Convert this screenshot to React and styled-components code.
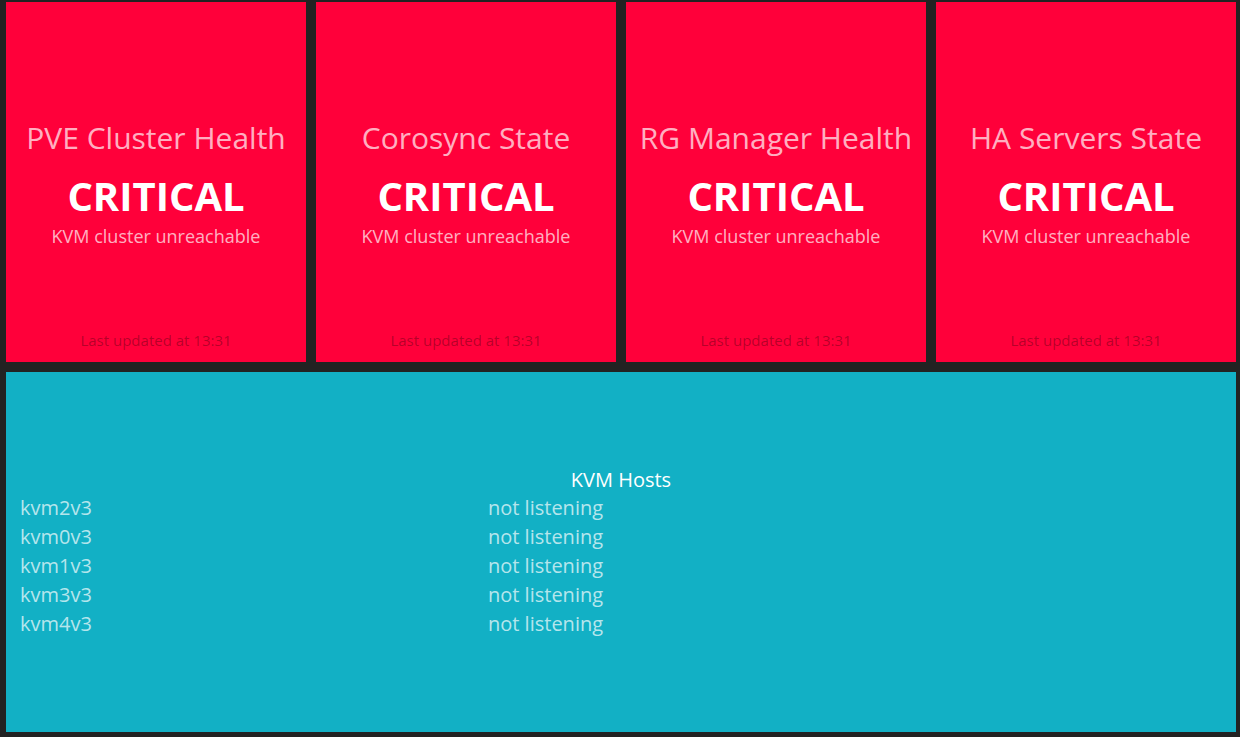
import React from "react";
import styled, { createGlobalStyle } from "styled-components";

const Global = createGlobalStyle`
  html, body { margin: 0; padding: 0; background: #fff; }
  body { font-family: "Open Sans", "DejaVu Sans", sans-serif; }
`;

const Board = styled.div`
  width: 1240px;
  min-height: 737px;
  box-sizing: border-box;
  background: #222;
  padding: 2px 4px 5px 6px;
  display: grid;
  grid-template-columns: repeat(4, 300px);
  grid-auto-rows: 360px;
  gap: 10px;
  align-content: start;
`;

const Tile = styled.div`
  background: ${(p) => p.$bg};
  color: #fff;
  display: flex;
  flex-direction: column;
  align-items: center;
  text-align: center;
  grid-column: ${(p) => (p.$span ? `span ${p.$span}` : "auto")};
`;

const Spacer = styled.div`
  flex: 1;
  display: flex;
  align-items: flex-end;
  justify-content: center;
  width: 100%;
`;

const Title = styled.h1`
  margin: 4px 0 18px;
  font-size: 30px;
  font-weight: 400;
  line-height: 36px;
  color: rgba(255, 255, 255, 0.7);
`;

const Status = styled.h2`
  margin: 0;
  font-size: 40px;
  font-weight: 700;
  line-height: 44px;
  color: #fff;
`;

const Detail = styled.p`
  margin: 6px 0 0;
  font-size: 18px;
  line-height: 24px;
  color: rgba(255, 255, 255, 0.7);
`;

const Updated = styled.p`
  margin: 0 0 12px;
  font-size: 15px;
  line-height: 20px;
  color: rgba(0, 0, 0, 0.3);
`;

const ListTitle = styled.h1`
  margin: 0;
  font-size: 20px;
  font-weight: 400;
  line-height: 26px;
  color: #fff;
`;

const List = styled.div`
  width: 100%;
  box-sizing: border-box;
  padding-left: 14px;
  display: grid;
  grid-template-columns: 468px 1fr;
  text-align: left;
`;

const Cell = styled.span`
  font-size: 20px;
  line-height: 29px;
  color: rgba(255, 255, 255, 0.7);
`;

const tiles = [
  "PVE Cluster Health",
  "Corosync State",
  "RG Manager Health",
  "HA Servers State",
];

const hosts = ["kvm2v3", "kvm0v3", "kvm1v3", "kvm3v3", "kvm4v3"];

export default function App() {
  return (
    <>
      <Global />
      <Board>
        {tiles.map((t) => (
          <Tile key={t} $bg="#ff003a">
            <Spacer />
            <Title>{t}</Title>
            <Status>CRITICAL</Status>
            <Detail>KVM cluster unreachable</Detail>
            <Spacer>
              <Updated>Last updated at 13:31</Updated>
            </Spacer>
          </Tile>
        ))}
        <Tile $bg="#12b0c5" $span={4}>
          <Spacer />
          <ListTitle>KVM Hosts</ListTitle>
          <List>
            {hosts.map((h) => (
              <React.Fragment key={h}>
                <Cell>{h}</Cell>
                <Cell>not listening</Cell>
              </React.Fragment>
            ))}
          </List>
          <Spacer />
        </Tile>
      </Board>
    </>
  );
}
